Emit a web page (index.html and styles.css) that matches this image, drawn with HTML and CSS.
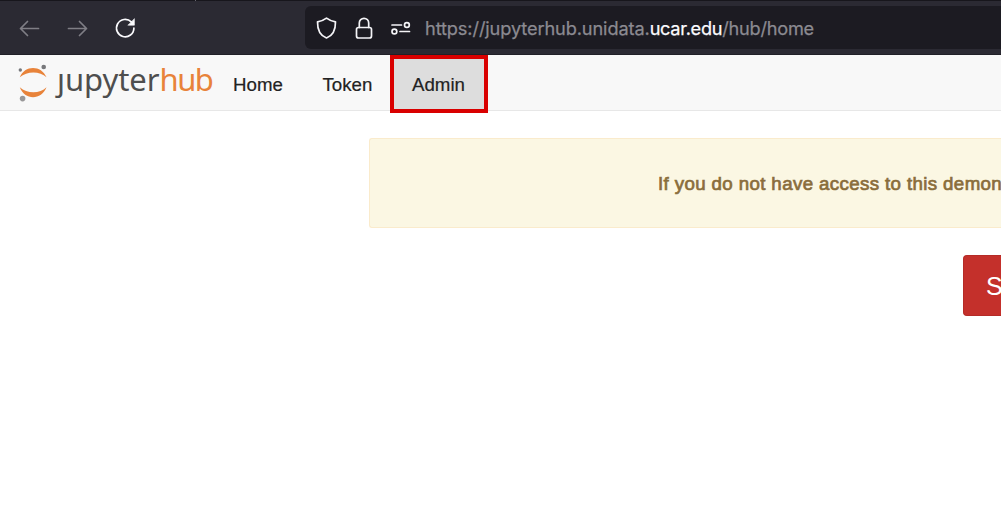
FILE: index.html
```
<!DOCTYPE html>
<html lang="en">
<head>
<meta charset="utf-8">
<title>JupyterHub</title>
<link rel="stylesheet" href="styles.css">
</head>
<body>
<header class="browser">
  <div class="tab-edge"></div>
  <div class="controls">
    <svg class="tool dim" viewBox="0 0 24 24"><path d="M21.500 12.500H3.500M10.500 5.500L3.500 12.500L10.500 19.500"/></svg>
    <svg class="tool dim" viewBox="0 0 24 24"><path d="M3.500 12.500H21.500M14.500 5.500L21.500 12.500L14.500 19.500"/></svg>
    <svg class="tool" viewBox="0 0 24 24"><path class="reload" d="M20.900 12.200A8.700 8.700 0 1 1 18.300 5.900"/><path class="solid" d="M21.400 3V9.200H15.200Z"/></svg>
  </div>
  <div class="address">
    <svg class="info shield" viewBox="0 0 24 24"><path d="M12.500 2.200C9.800 4.300 6.800 5.300 3.500 5.800C3.400 13 5.500 19.500 12.500 22C19.500 19.500 21.600 13 21.500 5.800C18.200 5.300 15.200 4.300 12.500 2.200Z"/></svg>
    <svg class="info lock" viewBox="0 0 24 24"><rect x="4.500" y="11.500" width="15" height="10.500" rx="2"/><path d="M7.300 11.500V7A4.700 4.700 0 0 1 16.700 7V11.500"/></svg>
    <svg class="info perms" viewBox="0 0 24 24"><path d="M4 9H13.500M12 15.500H21.500"/><circle cx="18.900" cy="9" r="2.400"/><circle cx="6.400" cy="15.500" r="2.400"/></svg>
    <div class="url">https://jupyterhub.unidata.<span class="domain">ucar.edu</span><span class="path">/hub/home</span></div>
  </div>
</header>
<nav class="navbar">
  <a class="brand">
    <svg class="mark" viewBox="0 0 30 40">
      <path class="arc" d="M1.800 13.300C6.500 0.800 23.500 0.800 28.500 13.300C22 6.900 9 6.900 1.800 13.300Z"/>
      <path class="arc" d="M1.800 23.300C6.500 36.500 23.500 36.500 28.500 23.300C22 30 9 30 1.800 23.300Z"/>
      <circle class="moon" cx="2.300" cy="6" r="1.700"/><circle class="moon" cx="25.700" cy="3" r="2.300"/><circle class="moon light" cx="4.600" cy="34.600" r="2.800"/>
    </svg>
    <span class="word"><span class="jay">j</span>upyter<span class="hub">hub</span></span>
  </a>
  <a class="link home">Home</a>
  <a class="link token">Token</a>
  <a class="link admin">Admin</a>
</nav>
<main class="content">
  <div class="alert">If you do not have access to this demon</div>
  <a class="start">S</a>
</main>
</body>
</html>
```
FILE: styles.css
```
* { box-sizing: border-box; }
body { margin: 0; width: 1001px; height: 507px; overflow: hidden; background: #fff; font-family: "Liberation Sans", Arial, sans-serif; }
.browser { position: relative; display: flex; height: 55px; background: #2b2a33; border-top: 1px solid #17161c; border-bottom: 1px solid #202027; }
.tab-edge { position: absolute; left: 195px; top: -1px; width: 1px; height: 1px; background: #66656d; }
.controls { display: flex; align-items: center; gap: 24px; width: 305px; padding-left: 17px; flex: none; }
.tool { width: 24px; height: 24px; fill: none; stroke: #fbfbfe; stroke-width: 1.7; stroke-linecap: round; stroke-linejoin: round; }
.dim { stroke: #7f7e85; }
.solid { fill: #fbfbfe; stroke-width: 0.6; }
.address { display: flex; align-items: center; width: 696px; height: 43px; margin-top: 5px; padding-left: 9px; background: #1c1b22; border-radius: 6px 0 0 6px; flex: none; }
.info { width: 24px; height: 24px; fill: none; stroke: #f4f4f7; stroke-width: 1.7; stroke-linejoin: round; stroke-linecap: round; flex: none; }
.lock { margin-left: 14px; }
.perms { margin-left: 12px; }
.url { margin-left: 13px; padding-top: 1px; font: 18.2px/24px Inter, sans-serif; letter-spacing: -0.12px; color: #8b8a91; -webkit-text-stroke: 0.25px currentColor; white-space: nowrap; }
.domain { color: #fbfbfe; letter-spacing: -0.3px; }
.path { letter-spacing: -0.25px; }
.navbar { display: flex; height: 56px; background: #f8f8f8; border-bottom: 1px solid #e7e7e7; }
.brand { display: flex; width: 215px; padding-left: 18px; }
.mark { width: 30px; height: 40px; margin-top: 9px; flex: none; }
.arc { fill: #e8833a; }
.moon { fill: #77787b; }
.light { fill: #989798; }
.word { margin-left: 9px; font: 31px/42px "Noto Sans", sans-serif; letter-spacing: -0.05px; color: #4e4e4e; padding-top: 3px; white-space: nowrap; }
.jay { display: inline-block; clip-path: inset(15px -4px -4px -6px); }
.hub { color: #e8833a; letter-spacing: -1.5px; }
.link { font-size: 18.7px; line-height: 59px; color: #222; -webkit-text-stroke: 0.2px currentColor; white-space: nowrap; }
.home { width: 90px; padding-left: 18px; }
.token { width: 85px; padding-left: 17.5px; }
.admin { width: 98px; height: 58px; padding-left: 18px; line-height: 51px; background: #ddd; border: 4px solid #d90000; position: relative; }
.content { display: flex; flex-direction: column; align-items: flex-start; padding: 27px 0 0 369px; }
.alert { width: 632px; height: 90px; padding-left: 288px; line-height: 90px; background: #fbf7e3; border: 1px solid #faebcc; border-right: 0; border-radius: 3px 0 0 3px; color: #8a6d3b; font-size: 18.7px; letter-spacing: 0.38px; -webkit-text-stroke: 0.7px currentColor; white-space: nowrap; overflow: hidden; }
.start { margin: 27px 0 0 594px; width: 38px; height: 61px; padding-left: 22px; background: #c4302b; border: 1px solid #b52b27; border-right: 0; border-radius: 4px 0 0 4px; color: #fff; font-size: 25px; line-height: 60px; white-space: nowrap; overflow: hidden; }
```
